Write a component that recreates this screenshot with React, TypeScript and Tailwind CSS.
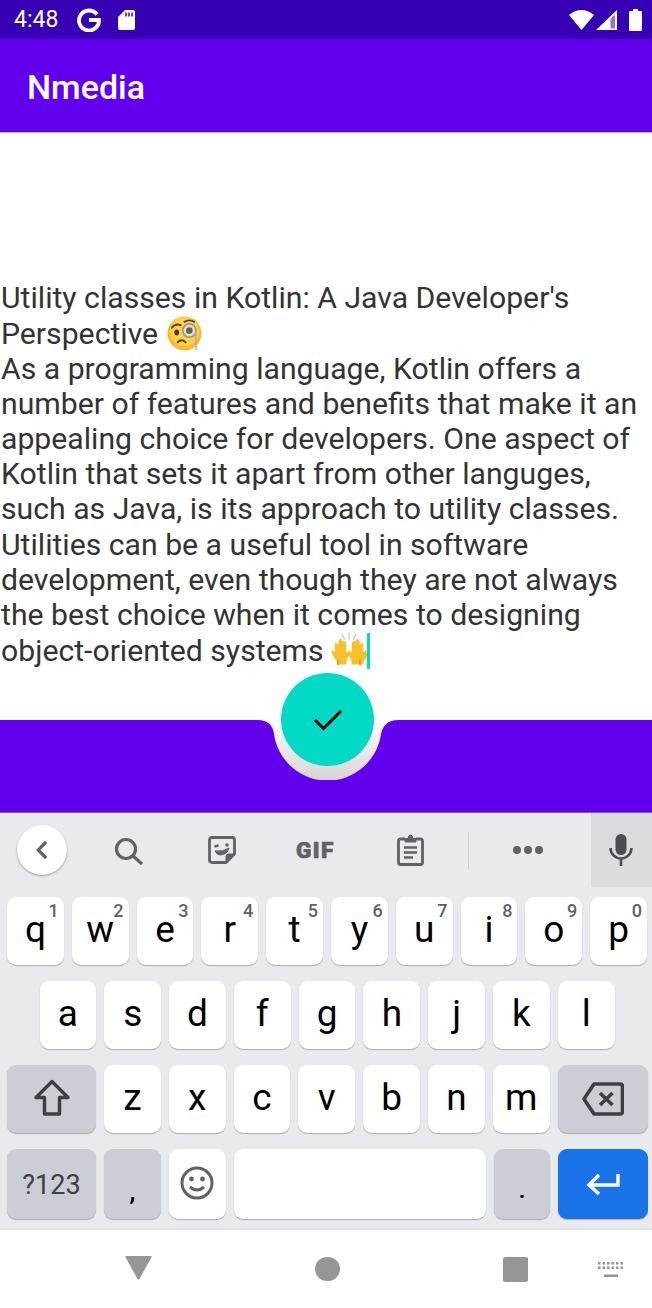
import { ReactNode } from "react";

const font = { fontFamily: "Roboto, 'Liberation Sans', sans-serif" };

function MonocleFace() {
  return (
    <svg viewBox="0 0 36 36" className="inline-block w-[35px] h-[35px] align-[-7px] ml-[1px]">
      <circle cx="18" cy="18" r="17.500" fill="#f9b92e" />
      <circle cx="18" cy="16" r="15" fill="#fdd14a" />
      <path d="M5 12q4-5 9-2.500" fill="none" stroke="#5a4030" strokeWidth="2" strokeLinecap="round" />
      <path d="M18 6q5-3 10 0" fill="none" stroke="#5a4030" strokeWidth="2" strokeLinecap="round" />
      <ellipse cx="10" cy="17" rx="2.400" ry="3" fill="#4a3428" />
      <circle cx="23" cy="15" r="6.800" fill="#e6e2cf" stroke="#9c9c8e" strokeWidth="1.800" />
      <circle cx="23" cy="15" r="3.400" fill="#6b6152" />
      <path d="M29.500 16L30 35" stroke="#b0b0a8" strokeWidth="1.500" />
      <path d="M11 27q4-4 8 0" fill="none" stroke="#5a4030" strokeWidth="2" strokeLinecap="round" />
    </svg>
  );
}

function RaisingHands() {
  return (
    <svg viewBox="0 0 36 33" className="inline-block w-[36px] h-[33px] align-[-4px]">
      <g stroke="#c5ccd3" strokeWidth="1.400" strokeLinecap="round">
        <path d="M18 1v6M11 2l2.500 5M25 2l-2.500 5" />
      </g>
      <path d="M1 21q-1-2 .5-3l2.500 2-.5-7q0-2 1.500-2t2 2l.5-4q0-2 2-2t2 2v1q.500-1.500 2-1t1.500 2l.5 10 2-2q2 0 2 1.500l-3 6q-1 2-1 4v2H6v-3q-3-3-5-8.500z" fill="#fbc02d" />
      <path d="M35 21q1-2-.5-3L32 20l.5-7q0-2-1.500-2t-2 2l-.5-4q0-2-2-2t-2 2v1q-.500-1.500-2-1t-1.500 2l-.5 10-2-2q-2 0-2 1.500l3 6q1 2 1 4v2h12v-3q3-3 5-8.500z" fill="#fbc02d" />
      <path d="M7 33v-5M29 33v-5" stroke="#ef9c1d" strokeWidth="2" />
    </svg>
  );
}

function StatusBar() {
  return (
    <div className="h-[39px] bg-[#3700B3] flex items-center text-white pl-[14px] shrink-0">
      <span className="text-[23px] leading-none w-[64px]">4:48</span>
      <svg viewBox="0 0 24 24" className="w-[24px] h-[24px] -ml-[1px]" fill="none" stroke="#fff" strokeWidth="3.800">
        <path d="M20 6.500A10 10 0 1 0 22 12H12" />
      </svg>
      <svg viewBox="0 0 17 20" className="w-[17px] h-[20px] ml-[17px]">
        <path d="M7 0h8q2 0 2 2v16q0 2-2 2H2q-2 0-2-2V7z" fill="#fff" />
        <path d="M8 2.500v4M11 2.500v4M14 2.500v4" stroke="#3700B3" strokeWidth="1.500" />
      </svg>
      <div className="flex-1" />
      <svg viewBox="0 0 25 21" className="w-[25px] h-[21px]">
        <path d="M0 6Q12.500-4 25 6L12.500 21z" fill="#fff" />
      </svg>
      <svg viewBox="0 0 21 20" className="w-[21px] h-[20px] ml-[2px]">
        <path d="M0 20L21 0v20z" fill="#fff" />
        <path d="M14.500 9v9.500h4.500V4.500z" fill="#3700B3" opacity=".55" />
      </svg>
      <svg viewBox="0 0 13 22" className="w-[13px] h-[22px] ml-[12px] mr-[10px]">
        <path d="M4 0h5v2h3q1 0 1 1v18q0 1-1 1H1q-1 0-1-1V3q0-1 1-1h3z" fill="#fff" />
      </svg>
    </div>
  );
}

function BottomBar() {
  return (
    <div className="relative h-[93px] bg-[#6200EE] border-b border-[#8a4af0] shrink-0">
      {/* cutout under the fab */}
      <svg viewBox="0 0 160 60" className="absolute left-[248px] top-0 w-[160px] h-[60px]">
        <defs>
          <linearGradient id="notch" x1="0" y1="0" x2="0" y2="1">
            <stop offset="0" stopColor="#ffffff" />
            <stop offset="0.35" stopColor="#eeeeee" />
            <stop offset="1" stopColor="#d6d6d6" />
          </linearGradient>
        </defs>
        <path d="M10 0Q24 0 26 14A54 54 0 0 0 133 14Q136 0 150 0z" fill="url(#notch)" />
      </svg>
      <div className="absolute left-[281px] -top-[47px] w-[93px] h-[93px] rounded-full bg-[#03DAC5] flex items-center justify-center">
        <svg viewBox="0 0 30 24" className="w-[30px] h-[24px]" fill="none" stroke="#000" strokeWidth="3">
          <path d="M2 12l8.500 8.500L28 3" />
        </svg>
      </div>
    </div>
  );
}

function Key({ label, hint, w = "w-[56.800px]", dark, children, h = "h-[68px]" }: {
  label?: string; hint?: string; w?: string; dark?: boolean; children?: ReactNode; h?: string;
}) {
  return (
    <div className={`relative ${w} ${h} shrink-0 rounded-[9px] shadow-[0_1px_1px_#a9abaf] flex items-center justify-center ${dark ? "bg-[#CBCED4]" : "bg-white"}`}>
      {label && <span className="text-[37px] leading-none text-black -mt-[4px]">{label}</span>}
      {hint && <span className="absolute right-[5px] top-[5px] text-[18px] font-medium leading-none text-[#5f6368]">{hint}</span>}
      {children}
    </div>
  );
}

function Toolbar() {
  return (
    <div className="relative h-[74px] flex items-center">
      <div className="absolute left-[17px] top-[12px] w-[50px] h-[50px] rounded-full bg-white shadow-[0_1px_2px_#9a9a9a] flex items-center justify-center">
        <svg viewBox="0 0 14 22" className="w-[14px] h-[20px]" fill="none" stroke="#5f6368" strokeWidth="3.600">
          <path d="M11.500 2L3 11l8.500 9" />
        </svg>
      </div>
      <svg viewBox="0 0 29 28" className="absolute left-[114px] top-[24px] w-[29px] h-[28px]" fill="none" stroke="#5f6368" strokeWidth="3.200">
        <circle cx="12" cy="12" r="9.500" />
        <path d="M18.500 18.500L28 27" />
      </svg>
      <svg viewBox="0 0 28 28" className="absolute left-[208px] top-[23px] w-[28px] h-[28px]" fill="none" stroke="#5f6368" strokeWidth="2.800">
        <path d="M4 1.500h20q2.500 0 2.500 2.500v14L18 26.500H4q-2.500 0-2.500-2.500V4Q1.500 1.500 4 1.500z" />
        <path d="M26.500 18h-6q-2.500 0-2.500 2.500v6z" fill="#5f6368" strokeWidth="1" />
        <path d="M6.500 10.500l4-1" strokeWidth="2.600" />
        <circle cx="19" cy="9" r="1.800" fill="#5f6368" stroke="none" />
        <path d="M7 15q8 1 14-3q-2 7-9 7q-3 0-5-4z" fill="#5f6368" strokeWidth="1" />
      </svg>
      <div className="absolute left-[296px] top-[26px] w-[40px] text-[#5f6368] text-[22.500px] leading-[22px] font-black tracking-[1.400px] [-webkit-text-stroke:0.7px_#5f6368]">GIF</div>
      <svg viewBox="0 0 27 32" className="absolute left-[397px] top-[21px] w-[27px] h-[32px]" fill="none" stroke="#5f6368" strokeWidth="2.800">
        <path d="M8 5H3.500Q1.500 5 1.500 7v21.500q0 2 2 2h20q2 0 2-2V7q0-2-2-2H19" />
        <path d="M8 4.500h3Q11.500 1 13.500 1T16 4.500h3V8H8z" fill="#5f6368" strokeWidth="1" />
        <path d="M7 13.500h13M7 18.500h13M7 23.500h9" strokeWidth="2.600" />
      </svg>
      <div className="absolute left-[468px] top-[19px] w-[1px] h-[37px] bg-[#cfd1d5]" />
      <div className="absolute left-[513px] top-[33px] flex gap-[3px]">
        <div className="w-[8px] h-[8px] rounded-full bg-[#5f6368]" />
        <div className="w-[8px] h-[8px] rounded-full bg-[#5f6368]" />
        <div className="w-[8px] h-[8px] rounded-full bg-[#5f6368]" />
      </div>
      <div className="absolute right-0 top-0 w-[61px] h-[74px] bg-[#D9DBDF] flex items-center justify-center">
        <svg viewBox="0 0 24 32" className="w-[24px] h-[32px] -ml-[2px]">
          <rect x="6.500" y="0" width="11" height="21" rx="5.500" fill="#4a4d52" />
          <path d="M1.500 14a10.500 10.500 0 0 0 21 0M12 25v7" fill="none" stroke="#4a4d52" strokeWidth="2.600" />
        </svg>
      </div>
    </div>
  );
}

function Keyboard() {
  const row1 = [["q", "1"], ["w", "2"], ["e", "3"], ["r", "4"], ["t", "5"], ["y", "6"], ["u", "7"], ["i", "8"], ["o", "9"], ["p", "0"]];
  return (
    <div className="h-[417px] bg-[#E8EAED] border-b-2 border-[#e0e1e3] shrink-0">
      <Toolbar />
      <div className="flex flex-col gap-[16px] pt-[10px]">
        <div className="flex gap-[8px] pl-[7px]">
          {row1.map(([k, n]) => <Key key={k} label={k} hint={n} />)}
        </div>
        <div className="flex gap-[8px] pl-[39.500px]">
          {"asdfghjkl".split("").map((k) => <Key key={k} label={k} />)}
        </div>
        <div className="flex gap-[8px] pl-[7px]">
          <Key w="w-[89px]" dark>
            <svg viewBox="0 0 38 38" className="w-[38px] h-[38px] -mt-[2px]" fill="none" stroke="#3c4043" strokeWidth="3.400" strokeLinejoin="round">
              <path d="M19 2.500L3 18.500h8.500v16.500h15V18.500H35z" />
            </svg>
          </Key>
          {"zxcvbnm".split("").map((k) => <Key key={k} label={k} />)}
          <Key w="w-[90.500px]" dark>
            <svg viewBox="0 0 42 34" className="w-[42px] h-[34px]" fill="none" stroke="#3c4043" strokeWidth="3.600" strokeLinejoin="round">
              <path d="M12 2h26q2.500 0 2.500 2.500v25Q40.500 32 38 32H12L2 17z" />
              <path d="M18 11l12.500 12M30.500 11L18 23" />
            </svg>
          </Key>
        </div>
        <div className="flex gap-[8px] pl-[7px]">
          <Key w="w-[89px]" dark h="h-[70px]"><span className="text-[27px] leading-none text-[#3c4043] mt-[2px]">?123</span></Key>
          <Key dark h="h-[70px]"><span className="text-[26px] font-medium leading-none text-black mt-[14px]">,</span></Key>
          <Key h="h-[70px]">
            <svg viewBox="0 0 34 34" className="w-[34px] h-[34px] -mt-[2px]" fill="none" stroke="#5f6368" strokeWidth="3">
              <circle cx="17" cy="17" r="15" />
              <circle cx="11.500" cy="13" r="2.400" fill="#5f6368" stroke="none" />
              <circle cx="22.500" cy="13" r="2.400" fill="#5f6368" stroke="none" />
              <path d="M10 21q7 6 14 0" />
            </svg>
          </Key>
          <Key w="w-[252px]" h="h-[70px]" />
          <Key dark h="h-[70px]"><span className="text-[26px] font-medium leading-none text-black mt-[10px]">.</span></Key>
          <div className="w-[90px] h-[70px] rounded-[9px] bg-[#1A73E8] shadow-[0_1px_1px_#a9abaf] flex items-center justify-center">
            <svg viewBox="0 0 34 24" className="w-[34px] h-[24px]" fill="none" stroke="#fff" strokeWidth="3.400">
              <path d="M32 2v11H4M13 3L3 13l10 9" />
            </svg>
          </div>
        </div>
      </div>
    </div>
  );
}

function NavBar() {
  return (
    <div className="flex-1 bg-white flex items-center relative">
      <svg viewBox="0 0 27 24" className="ml-[125px] -mt-[3px] w-[27px] h-[24px]"><path d="M1 0h25q1 0 .6 1L14.500 23q-1 1.500-2 0L.4 1Q0 0 1 0z" fill="#969696" /></svg>
      <div className="ml-[163px] w-[25px] h-[24px] rounded-full bg-[#969696]" />
      <div className="ml-[163px] w-[25px] h-[25px] rounded-[2px] bg-[#969696]" />
      <svg viewBox="0 0 26 15" className="ml-[70px] w-[26px] h-[15px]" fill="#969696">
        {[0, 4.500, 9, 13.500, 18, 22.500].map((x) => <g key={x}><rect x={x} y="0" width="2.500" height="2.500" /><rect x={x} y="4.500" width="2.500" height="2.500" /></g>)}
        <rect x="6" y="12.500" width="14" height="2.500" />
      </svg>
    </div>
  );
}

export default function App() {
  return (
    <div className="w-[652px] h-[1308px] flex flex-col overflow-hidden bg-white" style={font}>
      <StatusBar />
      <header className="h-[94px] bg-[#6200EE] flex items-center pl-[27px] shrink-0 border-b border-[#c9b0f5]">
        <h1 className="text-[34px] font-medium text-white leading-none mt-[3px]">Nmedia</h1>
      </header>
      <main className="h-[587px] shrink-0 flex flex-col justify-end pb-[51px] pl-[1px]">
        <p className="text-[30.200px] leading-[35.150px] text-[#333]">
          Utility classes in Kotlin: A Java Developer's<br />
          Perspective <MonocleFace /><br />
          As a programming language, Kotlin offers a number of features and benefits that make it an appealing choice for developers. One aspect of Kotlin that sets it apart from other languges, such as Java, is its approach to utility classes. Utilities can be a useful tool in software development, even though they are not always the best choice when it comes to designing object-oriented systems <RaisingHands />
          <span className="inline-block w-[3px] h-[36px] bg-[#03DAC5] align-[-8px]" />
        </p>
      </main>
      <BottomBar />
      <Keyboard />
      <NavBar />
    </div>
  );
}
